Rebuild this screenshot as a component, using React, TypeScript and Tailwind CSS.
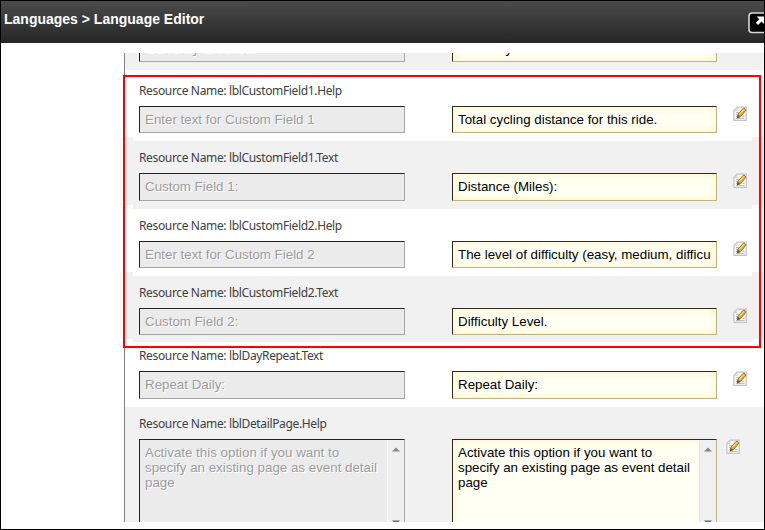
type Entry = {
  name: string;
  original: string;
  value: string;
  size: string;
  pad: string;
  input: string;
  shade: string;
};

const entries: Entry[] = [
  { name: 'lblCustomField1.Help', original: 'Enter text for Custom Field 1', value: 'Total cycling distance for this ride.', size: 'h-[71px]', pad: 'pt-[13px]', input: 'h-[27px]', shade: 'bg-white' },
  { name: 'lblCustomField1.Text', original: 'Custom Field 1:', value: 'Distance (Miles):', size: 'h-[68px]', pad: 'pt-[9px]', input: 'h-7', shade: 'bg-[#f1f1f1]' },
  { name: 'lblCustomField2.Help', original: 'Enter text for Custom Field 2', value: 'The level of difficulty (easy, medium, difficu', size: 'h-[67px]', pad: 'pt-[9px]', input: 'h-[27px]', shade: 'bg-white' },
  { name: 'lblCustomField2.Text', original: 'Custom Field 2:', value: 'Difficulty Level.', size: 'h-[66px]', pad: 'pt-[9px]', input: 'h-[27px]', shade: 'bg-[#f1f1f1]' },
  { name: 'lblDayRepeat.Text', original: 'Repeat Daily:', value: 'Repeat Daily:', size: 'h-[65px]', pad: 'pt-[6px]', input: 'h-7', shade: 'bg-white' },
];

const originalStyle =
  'w-[266px] shrink-0 overflow-hidden whitespace-nowrap rounded-[1px] border border-t-[#222] border-l-[#222] border-r-[#a5a5a5] border-b-[#a5a5a5] bg-[#ebebeb] pl-[5px] text-[#9c9c9c] [text-shadow:1px_1px_0_#fff]';
const valueStyle =
  'w-[265px] shrink-0 overflow-hidden whitespace-nowrap rounded-[1px] border border-t-[#2b2a20] border-l-[#2b2a20] border-r-[#bbb382] border-b-[#bbb382] bg-[#fffff4] px-[5px] text-black shadow-[inset_0_0_8px_1px_#fdf3c8]';
const fieldFont = "font-['Liberation_Sans',Arial,sans-serif] text-[13.33px] leading-[25px]";

function EditIcon() {
  return (
    <svg width="14" height="15" viewBox="0 0 14 15" className="shrink-0">
      <path d="M4 1.2H13.3V14.3H.9V4.4Z" fill="#f8f8f8" stroke="#c4c4c4" strokeWidth="1.2" />
      <path d="M1 4.5H4V1.5" fill="none" stroke="#cfcfcf" />
      <path d="M3 6.5H6.5M3 8.5H5M3 10.5H4.5M9.5 10.5H11.5M3 12.5H11.5" stroke="#b9bec4" />
      <path d="M4.4 11.8 5 8.2 9.9 2.6Q10.8 1.7 12 2.7Q13.2 3.8 12.4 4.8L7.7 10.5Z" fill="#e3a935" stroke="#946c24" strokeWidth=".9" />
      <path d="M6.5 8.2 11 3.3" stroke="#f9da7a" strokeWidth="1.2" />
      <path d="M4.1 12.2 4.8 9.1 7.2 11Z" fill="#54483c" />
    </svg>
  );
}

function Label({ name }: { name: string }) {
  return (
    <div className="h-4 whitespace-nowrap font-['Noto_Sans','Open_Sans',sans-serif] text-[12px] leading-4 tracking-[-0.35px] text-[#404040]">
      Resource Name: {name}
    </div>
  );
}

function Strip({ width }: { width: string }) {
  return (
    <div className={`${width} flex shrink-0 flex-col bg-white`}>
      <div className="h-[17px] bg-[#f1f1f1]" />
      <div className="mt-[67px] h-[68px] bg-[#f1f1f1]" />
      <div className="mt-[67px] h-[67px] bg-[#f1f1f1]" />
      <div className="mt-[68px] h-[115px] bg-[#f1f1f1]" />
    </div>
  );
}

function Scrollbar({ tone }: { tone: string }) {
  return (
    <div className={`${tone} flex w-[17px] shrink-0 flex-col items-center border-l pt-[7px]`}>
      <svg width="8" height="5" viewBox="0 0 8 5">
        <path d="M0 4.5 4 .5 8 4.5Z" fill="#858585" />
      </svg>
      <svg width="8" height="5" viewBox="0 0 8 5" className="mt-[68px]">
        <path d="M0 .5 4 4.5 8 .5Z" fill="#666" />
      </svg>
    </div>
  );
}

export default function App() {
  return (
    <div className="relative flex h-[530px] w-[765px] flex-col overflow-hidden border border-black bg-white">
      <header className="flex h-[42px] shrink-0 items-start justify-between overflow-hidden bg-linear-to-b from-[#4b4b4b] to-[#262626]">
        <h1 className="pt-2 pl-[3px] font-['Liberation_Sans',Arial,sans-serif] text-[14px] leading-5 font-bold whitespace-nowrap text-white">
          Languages &gt; Language Editor
        </h1>
        <div className="mt-[11px] h-[22px] w-4 shrink-0 overflow-hidden">
          <svg width="28" height="22" viewBox="0 0 28 22">
            <rect x="1" y="1" width="25" height="19.5" rx="3" fill="#000" stroke="#d8d8d8" strokeWidth="1.6" />
            <path d="M8.5 4.5H16V12L13.5 9.5 10 13 7.8 10.8 11.3 7.3Z" fill="#fff" />
          </svg>
        </div>
      </header>

      <main className="mt-[10px] ml-[123px] flex h-[469px] overflow-hidden border-l border-[#808080]">
        <Strip width="w-2" />
        <div className="flex w-[619px] shrink-0 flex-col">
          <div className="flex h-[17px] shrink-0 items-start gap-[47px] bg-[#f1f1f1] pl-1.5">
            <div className={`${originalStyle} ${fieldFont} -mt-[18px] h-[27px]`}>Currently Enrolled:</div>
            <div className={`${valueStyle} ${fieldFont} -mt-[18px] h-[27px]`}>Currently Enrolled:</div>
          </div>
          {entries.map((e) => (
            <section key={e.name} className={`${e.size} ${e.pad} ${e.shade} shrink-0 pl-1.5`}>
              <Label name={e.name} />
              <div className="mt-[7px] flex items-start">
                <div className={`${originalStyle} ${fieldFont} ${e.input}`}>{e.original}</div>
                <div className={`${valueStyle} ${fieldFont} ${e.input} ml-[47px]`}>{e.value}</div>
                <div className="ml-4">
                  <EditIcon />
                </div>
              </div>
            </section>
          ))}
          <section className="h-[115px] shrink-0 bg-[#f1f1f1] pt-[9px] pl-1.5">
            <Label name="lblDetailPage.Help" />
            <div className="mt-[7px] flex items-start">
              <div className={`${originalStyle} ${fieldFont} flex h-[95px]`}>
                <p className="flex-1 pt-[5px] leading-[15px] whitespace-nowrap">
                  Activate this option if you want to
                  <br />
                  specify an existing page as event detail
                  <br />
                  page
                </p>
                <Scrollbar tone="border-white bg-[#efefef]" />
              </div>
              <div className={`${valueStyle} ${fieldFont} ml-[47px] flex h-[95px] !pr-0`}>
                <p className="flex-1 pt-[5px] leading-[15px] whitespace-nowrap">
                  Activate this option if you want to
                  <br />
                  specify an existing page as event detail
                  <br />
                  page
                </p>
                <Scrollbar tone="border-[#e4e4e4] bg-[#f0f0f0]" />
              </div>
              <div className="ml-[9px]">
                <EditIcon />
              </div>
            </div>
          </section>
        </div>
        <Strip width="w-3" />
      </main>
      <div className="pointer-events-none absolute top-[74px] left-[122px] h-[273px] w-[638px] border-2 border-[#f00]" />
    </div>
  );
}
